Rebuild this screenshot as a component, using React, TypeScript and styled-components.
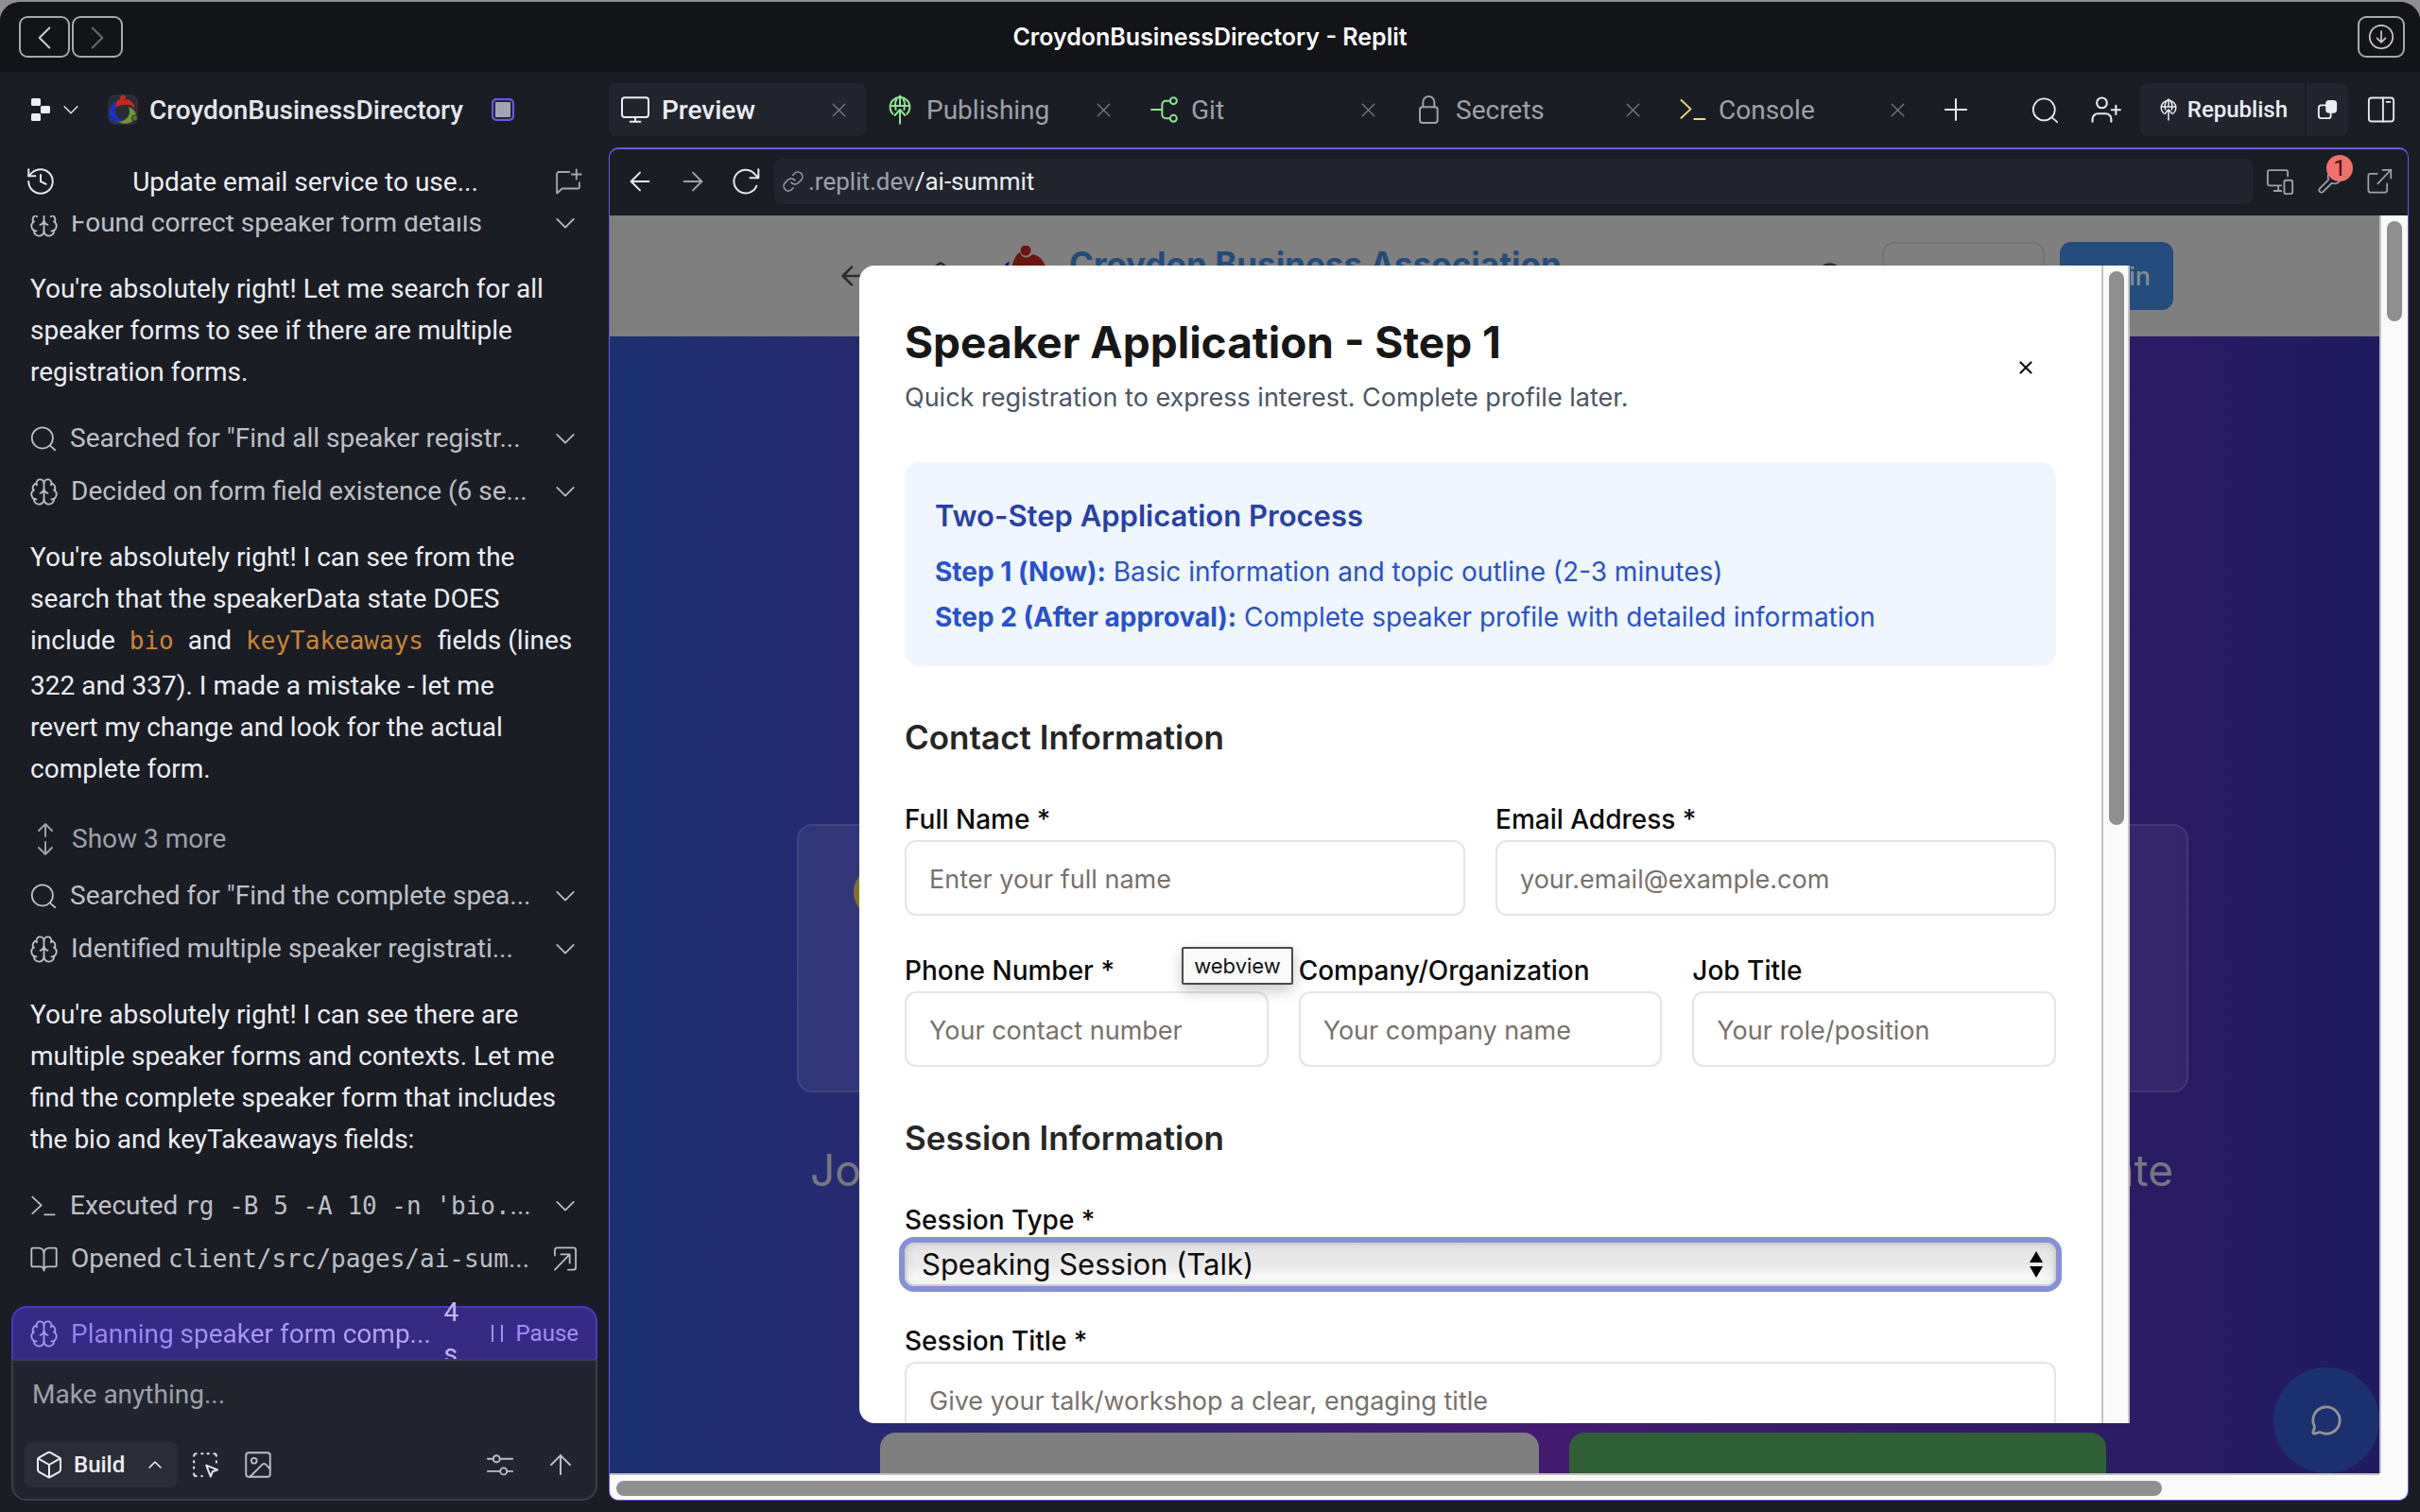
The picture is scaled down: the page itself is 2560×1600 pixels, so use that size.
import React from "react";
import styled, { createGlobalStyle, css } from "styled-components";
import {
  ArrowLeft,
  ArrowRight,
  ArrowUp,
  BookOpen,
  Box,
  ChevronLeft,
  ChevronRight,
  ChevronUp,
  History,
  Home,
  Image as ImageIcon,
  Link,
  MessageCircle,
  Plus,
  Search,
  Wrench,
  X,
} from "lucide-react";

const ui = '"Roboto", "Noto Sans", sans-serif';
const page = '"Inter", "Liberation Sans", sans-serif';
const mono = '"DejaVu Sans Mono", "Liberation Mono", monospace';

const GlobalStyle = createGlobalStyle`
  * { box-sizing: border-box; }
  html, body, #root { height: 100%; }
  body { margin: 0; background: #8f8f91; font-family: ${ui}; }
  button, input, select, textarea { font: inherit; color: inherit; margin: 0; }
  h1, h2, h3, p { margin: 0; }
  svg { display: block; flex: none; }
`;

const Window = styled.div`
  height: 100vh;
  border-top: 2px solid #8f8f91;
  display: flex;
  flex-direction: column;
  overflow: hidden;
  background: #1b1d25;
  border-radius: 22px 22px 0 0;
`;

const TitleBar = styled.header`
  height: 74px;
  flex: none;
  display: grid;
  grid-template-columns: 1fr auto 1fr;
  align-items: center;
  padding: 0 16px;
  background: #131418;
`;

const WindowTitle = styled.h1`
  font: 600 25px/32px ${page};
  color: #fff;
`;

const TitleGroup = styled.div<{ $end?: boolean }>`
  display: flex;
  gap: 2px;
  padding-left: 4px;
  justify-content: ${(p) => (p.$end ? "flex-end" : "flex-start")};
`;

const FrameButton = styled.button<{ $dim?: boolean; $narrow?: boolean }>`
  width: ${(p) => (p.$narrow ? 50 : 54)}px;
  height: 44px;
  display: grid;
  place-items: center;
  padding: 0;
  border: 2px solid #a9a9ab;
  border-radius: 9px;
  background: none;
  color: ${(p) => (p.$dim ? "#66676a" : "#c8c8ca")};
`;

const Workspace = styled.div`
  flex: 1;
  min-height: 0;
  display: grid;
  grid-template-columns: 644px minmax(0, 1fr);
`;

const Sidebar = styled.aside`
  display: flex;
  flex-direction: column;
  min-height: 0;
`;

const IconButton = styled.button<{ $color?: string; $wide?: boolean }>`
  display: grid;
  place-items: center;
  padding: 0 ${(p) => (p.$wide ? 8 : 0)}px;
  border: 0;
  background: none;
  color: ${(p) => p.$color || "#e6e8ee"};
`;

const ProjectBar = styled.div`
  height: 80px;
  flex: none;
  display: flex;
  align-items: center;
  padding: 0 32px;
`;

const LogoButton = styled(IconButton)`
  grid-auto-flow: column;
  gap: 10px;
  margin-right: 28px;
`;

const ProjectName = styled.span`
  margin: 0 30px 0 12px;
  font-size: 28px;
  font-weight: 500;
  color: #e4e6ec;
`;

const StatusChip = styled.span`
  width: 24px;
  height: 24px;
  border: 2px solid #6b54f0;
  border-radius: 5px;
  background: #a3a6b2;
  box-shadow: inset 0 0 0 2px #23233f;
`;

const ChatBar = styled.div`
  height: 72px;
  flex: none;
  display: flex;
  align-items: center;
  justify-content: space-between;
  padding: 0 28px 0 26px;
  font-size: 28px;
  color: #eceef3;
`;

const Feed = styled.div`
  flex: 1;
  min-height: 0;
  overflow: hidden;
  display: flex;
  flex-direction: column;
  justify-content: flex-end;
  padding: 0 32px 22px;
`;

const FeedRow = styled.button<{ $tall?: boolean }>`
  flex: none;
  height: ${(p) => (p.$tall ? 64 : 56)}px;
  width: 100%;
  display: flex;
  align-items: center;
  gap: 14px;
  padding: 0;
  border: 0;
  background: none;
  text-align: left;
  font-size: 28px;
  color: ${(p) => (p.$tall ? "#9da1ab" : "#bdc0c7")};
  white-space: nowrap;
`;

const RowText = styled.span`
  flex: 1;
  min-width: 0;
  overflow: hidden;
  line-height: 44px;
`;

const Mono = styled.code`
  font-family: ${mono};
  font-size: 26px;
`;

const Message = styled.p`
  flex: none;
  margin: 20px -16px 20px 0;
  font-size: 28px;
  line-height: 44px;
  color: #eceef3;
`;

const InlineCode = styled.code`
  display: inline-block;
  padding: 0 8px 4px;
  font-family: ${mono};
  font-size: 26px;
  line-height: 44px;
  color: #cd8435;
`;

const Dock = styled.div`
  flex: none;
  margin: 0 12px 12px;
`;

const StatusBar = styled.div`
  height: 56px;
  display: flex;
  align-items: center;
  padding: 0 18px;
  border: 2px solid #4b37c6;
  border-bottom: 0;
  border-radius: 16px 16px 0 0;
  background: #372a84;
  color: #a596f3;
  font-size: 28px;
`;

const StatusText = styled.span`
  flex: 1;
  margin-left: 14px;
  white-space: nowrap;
  background: linear-gradient(90deg, #9482f2, #b9adf7);
  -webkit-background-clip: text;
  background-clip: text;
  color: transparent;
`;

const Timer = styled.span`
  width: 16px;
  margin-right: 34px;
  line-height: 44px;
  color: #c5baf9;
`;

const PauseButton = styled.button`
  display: flex;
  align-items: center;
  gap: 14px;
  padding: 0;
  border: 0;
  background: none;
  font-size: 24px;
  color: #a08ff5;
`;

const Composer = styled.form`
  position: relative;
  height: 150px;
  display: flex;
  flex-direction: column;
  justify-content: space-between;
  border: 2px solid #3b3e47;
  border-radius: 0 0 16px 16px;
  background: #22252e;
  padding: 14px 12px 12px;
`;

const Prompt = styled.textarea`
  height: 44px;
  padding: 0 8px;
  border: 0;
  outline: 0;
  resize: none;
  overflow: hidden;
  background: none;
  font-size: 28px;
  line-height: 44px;
  color: #eceef3;
  &::placeholder { color: #9da1ab; opacity: 1; }
`;

const Tools = styled.div`
  display: flex;
  align-items: center;
  gap: 24px;
`;

const BuildButton = styled.button`
  height: 48px;
  display: flex;
  align-items: center;
  gap: 10px;
  margin-right: -10px;
  padding: 0 12px 0 10px;
  border: 0;
  border-radius: 8px;
  background: #2a2d37;
  font-size: 24px;
  font-weight: 500;
  color: #eceef3;
  & > svg:last-child { margin-left: 10px; }
`;

const Spacer = styled.span`
  flex: 1;
`;

const Main = styled.main`
  display: flex;
  flex-direction: column;
  min-height: 0;
  padding: 0 12px 12px 0;
`;

const TabStrip = styled.nav`
  height: 80px;
  flex: none;
  display: flex;
  align-items: center;
  padding-right: 14px;
`;

const Tab = styled.div<{ $active?: boolean }>`
  width: 272px;
  height: 56px;
  margin-right: 8px;
  display: flex;
  align-items: center;
  padding: 0 16px 0 12px;
  border-radius: 8px;
  background: ${(p) => (p.$active ? "#22252e" : "transparent")};
  color: ${(p) => (p.$active ? "#eceef3" : "#9da1ab")};
  font-weight: ${(p) => (p.$active ? 500 : 400)};
`;

const TabButton = styled.button`
  flex: 1;
  display: flex;
  align-items: center;
  gap: 12px;
  padding: 0;
  border: 0;
  background: none;
  text-align: left;
  font-size: 28px;
`;

const Actions = styled.div`
  flex: 1;
  display: flex;
  align-items: center;
  & > :nth-child(1) { margin-left: 6px; }
  & > :nth-child(2) { margin-left: auto; }
  & > :nth-child(3) { margin: 0 20px 0 32px; }
  & > :last-child { margin-left: 20px; }
`;

const SplitButton = styled.div`
  display: flex;
  gap: 2px;
  height: 56px;
`;

const SplitPart = styled.button<{ $side: "left" | "right" }>`
  display: flex;
  align-items: center;
  gap: 8px;
  border: 0;
  background: #22252e;
  color: #eceef3;
  font-size: 24px;
  font-weight: 500;
  ${(p) =>
    p.$side === "left"
      ? css`
          padding: 0 18px;
          border-radius: 8px 0 0 8px;
        `
      : css`
          padding: 0 11px;
          border-radius: 0 8px 8px 0;
        `}
`;

const Panel = styled.section`
  flex: 1;
  min-height: 0;
  display: flex;
  flex-direction: column;
  overflow: hidden;
  border: 1px solid #6b57e8;
  border-top-width: 2px;
  border-radius: 10px;
`;

const AddressBar = styled.div`
  height: 70px;
  flex: none;
  display: flex;
  align-items: center;
  gap: 24px;
  padding: 0 16px 2px;
`;

const Address = styled.div`
  flex: 1;
  height: 48px;
  display: flex;
  align-items: center;
  gap: 4px;
  margin: 0 -10px;
  padding: 0 8px;
  border-radius: 8px;
  background: #22252e;
  font-size: 26px;
  color: #9da1ab;
`;

const Path = styled.a`
  color: inherit;
  text-decoration: none;
  b { font-weight: 400; color: #eceef3; }
`;

const ToolBadge = styled.span`
  position: relative;
`;

const Count = styled.span`
  position: absolute;
  left: 10px;
  top: -14px;
  width: 28px;
  height: 28px;
  border-radius: 50%;
  background: #f0716c;
  color: #3d0c0c;
  text-align: center;
  font-size: 24px;
  line-height: 28px;
`;

const WebView = styled.div`
  flex: 1;
  min-height: 0;
  display: grid;
  grid-template-columns: minmax(0, 1fr) 30px;
  grid-template-rows: minmax(0, 1fr) 28px;
  background: #fafafa;
`;

const ScrollTrack = styled.div<{ $axis: "x" | "y" }>`
  background: #fafafa;
  border: 0 solid #c3c3c3;
  ${(p) =>
    p.$axis === "y"
      ? css`
          border-left-width: 2px;
          padding: 6px;
        `
      : css`
          border-top-width: 2px;
          padding: 6px 7px;
        `}
`;

const Thumb = styled.div<{ $axis: "x" | "y"; $size: string }>`
  border-radius: 8px;
  background: #8f8f8f;
  width: ${(p) => (p.$axis === "x" ? p.$size : "16px")};
  height: ${(p) => (p.$axis === "y" ? p.$size : "16px")};
`;

const Site = styled.div`
  position: relative;
  overflow: hidden;
  display: flex;
  flex-direction: column;
  font-family: ${page};
`;

const SiteHeader = styled.header`
  height: 128px;
  flex: none;
  display: flex;
  align-items: center;
  padding: 0 218px 0 240px;
  background: #7f7f7f;
  color: #2d2d2d;
`;

const HeaderIcons = styled.span`
  display: flex;
  gap: 62px;
  margin-right: 44px;
`;

const SiteName = styled.span`
  flex: 1;
  margin: -26px 0 0 20px;
  font-size: 35px;
  font-weight: 700;
  line-height: 40px;
  color: #234b7b;
`;

const SiteButton = styled.button<{ $primary?: boolean }>`
  height: 72px;
  margin-left: ${(p) => (p.$primary ? 16 : 38)}px;
  width: ${(p) => (p.$primary ? 120 : 172)}px;
  border: 2px solid ${(p) => (p.$primary ? "#244c7d" : "#747474")};
  border-radius: 12px;
  background: ${(p) => (p.$primary ? "#244c7d" : "transparent")};
  color: #858c94;
  font-size: 27px;
  font-weight: 500;
  text-align: right;
  padding-right: 22px;
`;

const Hero = styled.div`
  flex: 1;
  padding: 516px 202px 0 198px;
  background: linear-gradient(90deg, #1b3171 0%, #451a70 50%, #201b60 100%);
`;

const Badge = styled.div`
  height: 284px;
  padding: 42px 58px;
  border: 2px solid rgba(255, 255, 255, 0.08);
  border-radius: 16px;
  background: rgba(255, 255, 255, 0.055);
`;

const Dot = styled.span`
  display: block;
  width: 56px;
  height: 56px;
  border-radius: 50%;
  background: #80702a;
`;

const Tagline = styled.p`
  display: flex;
  justify-content: space-between;
  margin-top: 50px;
  padding: 0 16px 0 14px;
  font-size: 46px;
  line-height: 64px;
  color: #757880;
`;

const HeroActions = styled.div`
  display: grid;
  grid-template-columns: 697px 568px;
  gap: 32px;
  margin: 246px 0 0 88px;
`;

const HeroButton = styled.button<{ $tone: string }>`
  height: 120px;
  border: 0;
  border-radius: 16px;
  background: ${(p) => p.$tone};
`;

const ChatBubble = styled.button`
  position: absolute;
  right: 0;
  bottom: 0;
  width: 112px;
  height: 112px;
  display: grid;
  place-items: center;
  border: 0;
  border-radius: 50%;
  background: #1b316f;
  color: #939393;
`;

const Overlay = styled.div`
  position: absolute;
  inset: 0;
  display: flex;
  justify-content: center;
  padding: 53px 0;
`;

const Dialog = styled.div`
  width: 1344px;
  display: grid;
  grid-template-columns: minmax(0, 1fr) 28px;
  overflow: hidden;
  border-radius: 16px 0 0 16px;
  background: #fff;
  border-right: 2px solid #c3c3c3;
`;

const Form = styled.form`
  min-height: 0;
  overflow: hidden;
  padding: 56px 48px 0;
  color: #0c0a09;
`;

const FormHead = styled.div`
  display: flex;
  justify-content: space-between;
  align-items: center;
  margin-bottom: 48px;
`;

const FormTitle = styled.h2`
  margin-bottom: 14px;
  font-size: 46px;
  font-weight: 700;
  line-height: 50px;
  color: #171717;
`;

const Lead = styled.p`
  font-size: 27px;
  line-height: 40px;
  color: #4b5563;
`;

const Close = styled(IconButton)`
  width: 32px;
  height: 32px;
  margin-right: 16px;
`;

const Notice = styled.div`
  padding: 32px 32px 28px;
  border-radius: 16px;
  background: #eff6ff;
  color: #2850d0;
  font-size: 28px;
  line-height: 48px;
`;

const NoticeTitle = styled.h3`
  margin-bottom: 10px;
  font-size: 31px;
  font-weight: 600;
  line-height: 50px;
  color: #2740a8;
`;

const Section = styled.h3`
  margin-top: 48px;
  font-size: 35px;
  font-weight: 600;
  line-height: 54px;
  color: #262626;
`;

const Fields = styled.div<{ $cols: number }>`
  display: grid;
  grid-template-columns: repeat(${(p) => p.$cols}, minmax(0, 1fr));
  gap: 32px;
  margin-top: 36px;
  ${Section} + & { margin-top: 38px; }
`;

const Field = styled.label`
  display: block;
  font-size: 28px;
  font-weight: 500;
  line-height: 44px;
`;

const TextInput = styled.input`
  display: block;
  width: 100%;
  height: 80px;
  padding: 2px 24px 0;
  border: 2px solid #e5e5e5;
  border-radius: 12px;
  outline: 0;
  background: #fff;
  font-size: 27px;
  font-weight: 400;
  &::placeholder { color: #78716c; opacity: 1; }
`;

const SelectBox = styled.span`
  position: relative;
  display: block;
  padding-top: 2px;
  & > svg {
    position: absolute;
    right: 13px;
    top: 10px;
  }
`;

const Select = styled.select`
  appearance: none;
  display: block;
  width: 100%;
  height: 46px;
  padding: 0 16px;
  border: 2px solid #cfcfcf;
  border-radius: 10px;
  outline: 0;
  box-shadow: 0 0 0 6px #8590d6, inset 0 0 8px rgba(0, 0, 0, 0.12);
  background: linear-gradient(#e6e6e6, #e9e9e9 50%, #ffffff);
  font-size: 31px;
  font-weight: 400;
  line-height: 40px;
`;

const Tooltip = styled.span`
  position: absolute;
  left: 605px;
  top: 774px;
  width: 118px;
  height: 40px;
  border: 2px solid #4a4a4a;
  border-radius: 2px;
  background: #fafafa;
  box-shadow: 0 6px 16px rgba(0, 0, 0, 0.22);
  font-size: 22px;
  line-height: 36px;
  text-align: center;
  color: #111;
`;

type DrawProps = { size?: number; color?: string; width?: number; box?: string; children: React.ReactNode };
const Draw = ({ size = 28, color = "currentColor", width = 1.5, box = "0 0 24 24", children }: DrawProps) => (
  <svg width={size} height={size} viewBox={box} fill="none" stroke={color} strokeWidth={width} strokeLinecap="round" strokeLinejoin="round" aria-hidden="true">
    {children}
  </svg>
);

const BrainIcon = () => (
  <Draw size={29} width={1.4} box="1 1 22 22">
    <path d="M12 18V5M15 13a4.170 4.170 0 0 1-3-4 4.170 4.170 0 0 1-3 4" />
    <path d="M17.598 6.500A3 3 0 1 0 12 5a3 3 0 1 0-5.598 1.500M17.997 5.125a4 4 0 0 1 2.526 5.770M18 18a4 4 0 0 0 2-7.464M19.967 17.483A4 4 0 1 1 12 18a4 4 0 1 1-7.967-.517M6 18a4 4 0 0 1-2-7.464M6.003 5.125a4 4 0 0 0-2.526 5.770" />
  </Draw>
);

const SearchIcon = ({ size = 28 }: { size?: number }) => (
  <Draw size={size}>
    <circle cx="11" cy="11.500" r="9.500" />
    <path d="m18 18.500 4.500 4" />
  </Draw>
);

const DownIcon = ({ size = 28 }: { size?: number }) => (
  <Draw size={size}>
    <path d="M4.500 8.500 12 16l7.500-7.500" />
  </Draw>
);

const TerminalIcon = ({ color, size = 28 }: { color?: string; size?: number }) => (
  <Draw size={size} color={color}>
    <path d="m2 4 8 7.500-8 7.500M13 20h9" />
  </Draw>
);

const ExpandIcon = () => (
  <Draw size={30} width={1.4}>
    <path d="M13 10.500V-.500M7.500 5 13-.500l5.500 5.500M13 13.500v11M7.500 19 13 24.500l5.500-5.500" />
  </Draw>
);

const OpenIcon = () => (
  <Draw size={28}>
    <path d="M2.500 9V4a2 2 0 0 1 2-2h15a2 2 0 0 1 2 2v16a2 2 0 0 1-2 2h-5M2.500 22 16 8M8 8h8v8" />
  </Draw>
);

const LaunchIcon = () => (
  <Draw size={28}>
    <path d="M10 5H4a2 2 0 0 0-2 2v13a2 2 0 0 0 2 2h13a2 2 0 0 0 2-2v-6M10.500 14 22.500 1.500M15 1.500h7.500V9" />
  </Draw>
);

const NewChatIcon = () => (
  <Draw size={30}>
    <path d="M13 4H4a1.500 1.500 0 0 0-1.500 1.500V22L7 18h13a1.500 1.500 0 0 0 1.500-1.500V13M19 2v8M15 6h8" />
  </Draw>
);

const PublishIcon = ({ size, color }: { size: number; color?: string }) => (
  <Draw size={size} color={color}>
    <path d="M6.500 15.500A7.800 7.800 0 1 1 17.500 15.500M4.200 9h15.600M8.700 12C7.500 7 9 3 12 1.200 15 3 16.500 7 15.300 12M12 1.200V9M12 23V12M8 16.500 12 12l4 4.500" />
  </Draw>
);

const GitIcon = () => (
  <Draw size={32} color="#8de58f">
    <circle cx="19" cy="5" r="2.600" />
    <circle cx="19" cy="19" r="2.600" />
    <path d="M1.500 12H10M16.400 5H13a3 3 0 0 0-3 3v8a3 3 0 0 0 3 3h3.400" />
  </Draw>
);

const LockIcon = () => (
  <Draw size={32}>
    <rect x="4.500" y="10" width="14" height="12.500" rx="2" />
    <path d="M7 10V6a4.500 4.500 0 0 1 9 0v4" />
  </Draw>
);

const MonitorIcon = () => (
  <Draw size={32}>
    <rect x="1.500" y="2.500" width="21" height="15.500" rx="2" />
    <path d="M12 18v3.500M8 21.500h8" />
  </Draw>
);

const AddUserIcon = () => (
  <Draw size={34}>
    <circle cx="9.500" cy="7" r="3.800" />
    <path d="M2.500 21v-2a4 4 0 0 1 4-4h6a4 4 0 0 1 4 4v2M20 9v6.500M16.800 12.200h6.400" />
  </Draw>
);

const LayersIcon = () => (
  <Draw size={22} width={2}>
    <rect x="2" y="7" width="14" height="15" rx="3" />
    <rect x="11" y="2" width="11" height="13" rx="3" fill="currentColor" />
  </Draw>
);

const LayoutIcon = () => (
  <Draw size={30}>
    <rect x="1.500" y="2" width="21" height="20" rx="2.500" />
    <path d="M13.500 2v20M16.500 5.500h3" />
  </Draw>
);

const ReloadIcon = () => (
  <Draw size={32}>
    <path d="M20.500 15.500A9.300 9.300 0 1 1 19.300 6.500L22 9.200M22 2.500v6.700h-6.700" />
  </Draw>
);

const DevicesIcon = () => (
  <Draw size={30}>
    <path d="M18.500 7.500V4A1.500 1.500 0 0 0 17 2.500H3A1.500 1.500 0 0 0 1.500 4v10A1.500 1.500 0 0 0 3 15.500h10M10.500 15.500V20M7 20h6" />
    <rect x="15.500" y="11" width="7" height="11.500" rx="1.500" />
  </Draw>
);

const DownloadIcon = () => (
  <Draw size={28}>
    <circle cx="12" cy="12" r="10.500" />
    <path d="M12 7v10M8.200 13.200 12 17l3.800-3.800" />
  </Draw>
);

const SelectElementIcon = () => (
  <Draw size={30} width={1.6}>
    <path d="M2.500 4.500a2 2 0 0 1 2-2M9 2.500h1M14 2.500h1M19.500 2.500a2 2 0 0 1 2 2M2.500 9v1M2.500 14v1M2.500 19.500a2 2 0 0 0 2 2M21.500 9v1M9 21.500h.500M13 12.500l9.500 3.800-4.200 1.500-1.700 4.200Z" />
  </Draw>
);

const SlidersIcon = () => (
  <Draw size={30}>
    <path d="M1.500 7h5M12 7h10.500M1.500 17.500h10.500M18 17.500h4.500" />
    <circle cx="9" cy="7" r="2.800" />
    <circle cx="15" cy="17.500" r="2.800" />
  </Draw>
);

const ReplitLogo = () => (
  <svg width="22" height="24" viewBox="0 0 22 24" fill="#eceef3" aria-hidden="true">
    <rect x="1" y="0" width="10" height="8" rx="1.500" />
    <rect x="11" y="8" width="10" height="8" rx="1.500" />
    <rect x="1" y="16" width="10" height="8" rx="1.500" />
  </svg>
);

const ProjectIcon = () => (
  <svg width="32" height="32" viewBox="0 0 32 32" aria-hidden="true">
    <rect x="1" y="1" width="30" height="30" rx="6" fill="#2a2c33" stroke="#3a3d45" />
    <circle cx="16" cy="3.500" r="3" fill="#c62a1c" />
    <path d="M8 14C8 8 11 5 14 5c2 2 4 2 6 0 5 1 8 5 9 9-4-3-8-4-11-3-4 0-7 1-10 3Z" fill="#c62a1c" />
    <path d="M9 7C3 10 0 18 2 25c3 5 9 6 15 2-5 0-8-3-9-8 0-4 0-8 1-12Z" fill="#1732c4" />
    <path d="M22 13c2 5 1 10-3 13-3 2-5 3-8 3 6 3 13 2 17-2 5-5 0-12-6-14Z" fill="#6d9730" />
    <circle cx="28.500" cy="25" r="3" fill="#557c26" stroke="#2a2c33" />
    <circle cx="3.500" cy="26" r="2.500" fill="#1732c4" stroke="#2a2c33" />
  </svg>
);

const SiteLogo = () => (
  <svg width="56" height="64" viewBox="0 0 56 64" aria-hidden="true">
    <circle cx="30" cy="5" r="5.500" fill="#6b1512" />
    <path d="M14 30C16 14 21 8 24 7c2 7 10 7 13 2 10 2 14 10 17 21Z" fill="#6b1512" />
    <path d="M4 34C6 22 9 17 13 17c-2 6-3 11-2 17Z" fill="#14147a" />
  </svg>
);

type Row = { icon: React.ReactNode; text: React.ReactNode; open?: boolean };
const Activity = ({ icon, text, open }: Row) => (
  <FeedRow type="button">
    {icon}
    <RowText>{text}</RowText>
    {open ? <OpenIcon /> : <DownIcon />}
  </FeedRow>
);

const tabs = [
  { name: "Preview", icon: <MonitorIcon />, active: true },
  { name: "Publishing", icon: <PublishIcon size={32} color="#8de58f" /> },
  { name: "Git", icon: <GitIcon /> },
  { name: "Secrets", icon: <LockIcon /> },
  { name: "Console", icon: <TerminalIcon size={30} color="#f0dc7d" /> },
];

const Input = ({ label, hint, type = "text" }: { label: string; hint: string; type?: string }) => (
  <Field>
    {label}
    <TextInput type={type} placeholder={hint} />
  </Field>
);

export default function App() {
  return (
    <Window>
      <GlobalStyle />
      <TitleBar>
        <TitleGroup>
          <FrameButton aria-label="Back"><ChevronLeft size={42} strokeWidth={1.2} /></FrameButton>
          <FrameButton $dim aria-label="Forward"><ChevronRight size={42} strokeWidth={1.2} /></FrameButton>
        </TitleGroup>
        <WindowTitle>CroydonBusinessDirectory - Replit</WindowTitle>
        <TitleGroup $end>
          <FrameButton $narrow aria-label="Downloads"><DownloadIcon /></FrameButton>
        </TitleGroup>
      </TitleBar>

      <Workspace>
        <Sidebar>
          <ProjectBar>
            <LogoButton aria-label="Menu"><ReplitLogo /><DownIcon size={22} /></LogoButton>
            <ProjectIcon />
            <ProjectName>CroydonBusinessDirectory</ProjectName>
            <StatusChip />
          </ProjectBar>
          <ChatBar>
            <IconButton aria-label="History"><History size={34} strokeWidth={1.4} /></IconButton>
            <span>Update email service to use...</span>
            <IconButton aria-label="New chat" $color="#a5a8b2"><NewChatIcon /></IconButton>
          </ChatBar>
          <Feed>
            <Activity icon={<BrainIcon />} text="Found correct speaker form details" />
            <Message>
              You're absolutely right! Let me search for all<br />
              speaker forms to see if there are multiple<br />
              registration forms.
            </Message>
            <Activity icon={<SearchIcon />} text={'Searched for "Find all speaker registr...'} />
            <Activity icon={<BrainIcon />} text="Decided on form field existence (6 se..." />
            <Message>
              You're absolutely right! I can see from the<br />
              search that the speakerData state DOES<br />
              include <InlineCode>bio</InlineCode> and <InlineCode>keyTakeaways</InlineCode> fields (lines<br />
              322 and 337). I made a mistake - let me<br />
              revert my change and look for the actual<br />
              complete form.
            </Message>
            <FeedRow type="button" $tall>
              <svg width="30" height="36" viewBox="0 0 30 36" fill="none" stroke="currentColor" strokeWidth="2" strokeLinecap="round" strokeLinejoin="round" aria-hidden="true">
                <path d="M16 15V3M9 9l7-7 7 7M16 21v12M9 27l7 7 7-7" />
              </svg>
              <RowText>Show 3 more</RowText>
            </FeedRow>
            <Activity icon={<SearchIcon />} text={'Searched for "Find the complete spea...'} />
            <Activity icon={<BrainIcon />} text="Identified multiple speaker registrati..." />
            <Message>
              You're absolutely right! I can see there are<br />
              multiple speaker forms and contexts. Let me<br />
              find the complete speaker form that includes<br />
              the bio and keyTakeaways fields:
            </Message>
            <Activity icon={<TerminalIcon />} text={<>Executed <Mono>rg -B 5 -A 10 -n 'bio.</Mono>...</>} />
            <Activity open icon={<BookOpen size={29} viewBox="1 1 22 22" strokeWidth={1.4} />} text={<>Opened <Mono>client/src/pages/ai-sum</Mono>...</>} />
          </Feed>
          <Dock>
            <StatusBar>
              <BrainIcon />
              <StatusText>Planning speaker form comp...</StatusText>
              <Timer>4 s</Timer>
              <PauseButton>
                <svg width="12" height="20" viewBox="0 0 12 20" stroke="currentColor" strokeWidth="2"><path d="M1 1v18M11 1v18" /></svg>
                Pause
              </PauseButton>
            </StatusBar>
            <Composer>
              <Prompt aria-label="Prompt" placeholder="Make anything..." />
              <Tools>
                <BuildButton type="button"><Box size={32} strokeWidth={1.5} />Build<ChevronUp size={24} strokeWidth={1.6} /></BuildButton>
                <IconButton type="button" aria-label="Select element"><SelectElementIcon /></IconButton>
                <IconButton type="button" aria-label="Add image" $color="#bdc0c7"><ImageIcon size={34} strokeWidth={1.3} /></IconButton>
                <Spacer />
                <IconButton type="button" aria-label="Settings" $color="#bdc0c7"><SlidersIcon /></IconButton>
                <IconButton type="button" $wide aria-label="Send" $color="#bdc0c7"><ArrowUp size={34} strokeWidth={1.4} /></IconButton>
              </Tools>
            </Composer>
          </Dock>
        </Sidebar>

        <Main>
          <TabStrip>
            {tabs.map((t) => (
              <Tab key={t.name} $active={t.active}>
                <TabButton>{t.icon}{t.name}</TabButton>
                <IconButton aria-label={`Close ${t.name}`} $color="#777b86"><X size={25} strokeWidth={1.2} /></IconButton>
              </Tab>
            ))}
            <Actions>
              <IconButton aria-label="New tab"><Plus size={38} strokeWidth={1.3} /></IconButton>
              <IconButton aria-label="Search"><SearchIcon size={29} /></IconButton>
              <IconButton aria-label="Invite"><AddUserIcon /></IconButton>
              <SplitButton>
                <SplitPart $side="left"><PublishIcon size={24} />Republish</SplitPart>
                <SplitPart $side="right" aria-label="Deployments"><LayersIcon /></SplitPart>
              </SplitButton>
              <IconButton aria-label="Layout"><LayoutIcon /></IconButton>
            </Actions>
          </TabStrip>

          <Panel>
            <AddressBar>
              <IconButton aria-label="Go back"><ArrowLeft size={32} strokeWidth={1.5} /></IconButton>
              <IconButton aria-label="Go forward" $color="#9da1ab"><ArrowRight size={32} strokeWidth={1.5} /></IconButton>
              <IconButton aria-label="Reload"><ReloadIcon /></IconButton>
              <Address>
                <Link size={24} strokeWidth={1.5} />
                <Path href="#ai-summit">.replit.dev<b>/ai-summit</b></Path>
              </Address>
              <IconButton aria-label="Devices" $color="#9da1ab"><DevicesIcon /></IconButton>
              <ToolBadge>
                <IconButton aria-label="Tools" $color="#9da1ab"><Wrench size={28} strokeWidth={1.5} /></IconButton>
                <Count>1</Count>
              </ToolBadge>
              <IconButton aria-label="Open in new tab" $color="#9da1ab"><LaunchIcon /></IconButton>
            </AddressBar>

            <WebView>
              <Site>
                <SiteHeader>
                  <HeaderIcons>
                    <ArrowLeft size={32} strokeWidth={2} />
                    <Home size={32} strokeWidth={2} />
                  </HeaderIcons>
                  <SiteLogo />
                  <SiteName>Croydon Business Association</SiteName>
                  <Search size={32} strokeWidth={2.5} />
                  <SiteButton aria-label="Account" />
                  <SiteButton $primary>Join</SiteButton>
                </SiteHeader>
                <Hero>
                  <Badge><Dot /></Badge>
                  <Tagline><span>Join</span><span>ate</span></Tagline>
                  <HeroActions>
                    <HeroButton $tone="#7f7f7f" aria-label="Register" />
                    <HeroButton $tone="#2f5f34" aria-label="Apply" />
                  </HeroActions>
                </Hero>
                <ChatBubble aria-label="Chat"><MessageCircle size={34} strokeWidth={2} /></ChatBubble>
                <Overlay>
                  <Dialog role="dialog" aria-label="Speaker Application">
                    <Form>
                      <FormHead>
                        <div>
                          <FormTitle>Speaker Application - Step 1</FormTitle>
                          <Lead>Quick registration to express interest. Complete profile later.</Lead>
                        </div>
                        <Close type="button" aria-label="Close" $color="#171717"><X size={22} strokeWidth={2.5} /></Close>
                      </FormHead>
                      <Notice>
                        <NoticeTitle>Two-Step Application Process</NoticeTitle>
                        <p><strong>Step 1 (Now):</strong> Basic information and topic outline (2-3 minutes)</p>
                        <p><strong>Step 2 (After approval):</strong> Complete speaker profile with detailed information</p>
                      </Notice>
                      <Section>Contact Information</Section>
                      <Fields $cols={2}>
                        <Input label="Full Name *" hint="Enter your full name" />
                        <Input label="Email Address *" hint="your.email@example.com" type="email" />
                      </Fields>
                      <Fields $cols={3}>
                        <Input label="Phone Number *" hint="Your contact number" type="tel" />
                        <Input label="Company/Organization" hint="Your company name" />
                        <Input label="Job Title" hint="Your role/position" />
                      </Fields>
                      <Section>Session Information</Section>
                      <Fields $cols={1}>
                        <Field>
                          Session Type *
                          <SelectBox>
                            <Select defaultValue="talk"><option value="talk">Speaking Session (Talk)</option></Select>
                            <svg width="16" height="30" viewBox="0 0 16 30" fill="#000"><path d="M8 1 15 13H1ZM8 29 1 17h14Z" /></svg>
                          </SelectBox>
                        </Field>
                      </Fields>
                      <Fields $cols={1}>
                        <Input label="Session Title *" hint="Give your talk/workshop a clear, engaging title" />
                      </Fields>
                    </Form>
                    <ScrollTrack $axis="y"><Thumb $axis="y" $size="586px" /></ScrollTrack>
                  </Dialog>
                </Overlay>
                <Tooltip role="tooltip">webview</Tooltip>
              </Site>
              <ScrollTrack $axis="y"><Thumb $axis="y" $size="106px" /></ScrollTrack>
              <ScrollTrack $axis="x"><Thumb $axis="x" $size="88%" /></ScrollTrack>
            </WebView>
          </Panel>
        </Main>
      </Workspace>
    </Window>
  );
}
